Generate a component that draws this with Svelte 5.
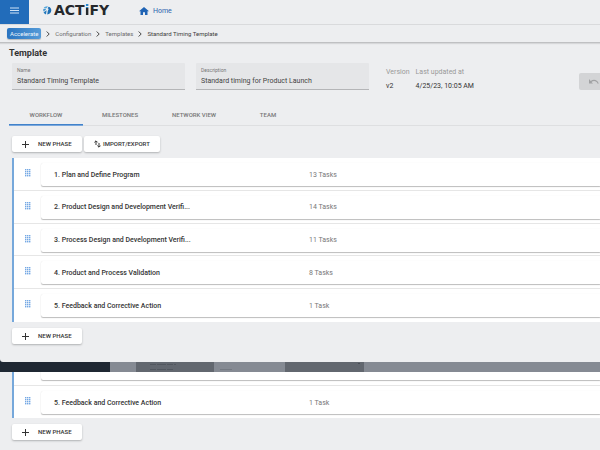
<script>
  const crumbs = ['Configuration', 'Templates', 'Standard Timing Template'];
  const tabs = ['WORKFLOW', 'MILESTONES', 'NETWORK VIEW', 'TEAM'];
  const phases = [
    { name: '1. Plan and Define Program', tasks: '13 Tasks' },
    { name: '2. Product Design and Development Verifi...', tasks: '14 Tasks' },
    { name: '3. Process Design and Development Verifi...', tasks: '11 Tasks' },
    { name: '4. Product and Process Validation', tasks: '8 Tasks' },
    { name: '5. Feedback and Corrective Action', tasks: '1 Task' }
  ];
  const dots = [0, 1, 2, 3].flatMap((r) => [0, 1, 2].map((c) => [c * 2, r * 2]));
  let active = $state('WORKFLOW');
</script>

{#snippet newPhase()}
  <button class="btn new" type="button">
    <svg width="7" height="7" viewBox="0 0 7 7" aria-hidden="true"><path d="M3.5 0v7M0 3.5h7" stroke="#333" stroke-width="1" /></svg>
    NEW PHASE
  </button>
{/snippet}

{#snippet phaseRow(phase)}
  <li>
    <svg class="grip" width="6" height="8" viewBox="0 0 6 8" aria-hidden="true">
      {#each dots as [x, y]}
        <rect {x} {y} width="1.400" height="1.400" fill="#74a8e4" />
      {/each}
    </svg>
    <div class="card">
      <span class="name">{phase.name}</span>
      <span class="tasks">{phase.tasks}</span>
    </div>
  </li>
{/snippet}

<div class="page">
  <section class="window">
    <header>
      <button class="menu" type="button" aria-label="Menu">
        <svg width="9" height="7" viewBox="0 0 9 7"><path d="M0 1h9M0 3.5h9M0 6h9" stroke="#cfe2f6" stroke-width="1" /></svg>
      </button>
      <div class="logo">
        <svg width="9" height="9" viewBox="0 0 9 9" aria-hidden="true">
          <path d="M.6 2.2C1.5.8 3.2.1 4.8.4L3.5 2.2Z" fill="#55a7dc" />
          <path d="M.3 3.1 3 2.8 2.6 4.1.3 5.4Z" fill="#3f93d0" />
          <path d="M.6 6.2 3.6 4.2 3 8.4C1.8 8 .9 7.2.6 6.2Z" fill="#2379bd" />
          <path d="M4.6 2.2 5.7.7C7.4 1.3 8.4 2.8 8.3 4.6 8.2 6.7 6.5 8.3 4.2 8.5L4.8 5 5.7 3.1Z" fill="#1c6eb4" />
        </svg>
        <span>ACT<b>i</b>FY</span>
      </div>
      <a class="home" href="#home">
        <svg width="10" height="8" viewBox="0 0 10 8" aria-hidden="true"><path d="M4 8V5.2h2V8h2.500V4.200H10L5 0 0 4.200h1.500V8Z" fill="#1f63b4" /></svg>
        Home
      </a>
    </header>

    <nav class="crumbs" aria-label="Breadcrumb">
      <a class="chip" href="#accelerate">Accelerate</a>
      {#each crumbs as crumb}
        <svg width="4" height="6" viewBox="0 0 4 6" aria-hidden="true"><path d="M.7.5 3.2 3 .7 5.500" fill="none" stroke="#444" stroke-width="1" /></svg>
        <a href="#crumb">{crumb}</a>
      {/each}
    </nav>

    <h1>Template</h1>

    <div class="details">
      <div class="field">
        <label for="name">Name</label>
        <input id="name" value="Standard Timing Template" />
      </div>
      <div class="field">
        <label for="description">Description</label>
        <input id="description" value="Standard timing for Product Launch" />
      </div>
      <dl>
        <div><dt>Version</dt><dd>v2</dd></div>
        <div><dt>Last updated at</dt><dd>4/25/23, 10:05 AM</dd></div>
      </dl>
      <button class="undo" type="button" aria-label="Undo" disabled>
        <svg width="10" height="5" viewBox="0 0 10 5"><path d="M0 0v4.500h4L2.500 3C4.800 1.200 7.600 2 8.700 4.700L9.700 4.400C8.400.7 4.700-.4 1.700 2Z" fill="#a0a1a3" /></svg>
      </button>
    </div>

    <div class="tabs" role="tablist">
      {#each tabs as tab}
        <button type="button" role="tab" aria-selected={active === tab} class:active={active === tab} onclick={() => (active = tab)}>{tab}</button>
      {/each}
    </div>

    <div class="actions">
      {@render newPhase()}
      <button class="btn transfer" type="button">
        <svg width="7" height="8" viewBox="0 0 7 8" aria-hidden="true"><path d="M2 5V1M.4 2.400 2 .8l1.600 1.600M5 3v4M3.400 5.600 5 7.200l1.600-1.600" fill="none" stroke="#333" stroke-width="1" /></svg>
        IMPORT/EXPORT
      </button>
    </div>

    <ul class="phases">
      {#each phases as phase}
        {@render phaseRow(phase)}
      {/each}
    </ul>
    <div class="foot">{@render newPhase()}</div>
  </section>

  <div class="strip">
    <svg width="490" height="10" viewBox="0 0 490 10" aria-hidden="true">
      <rect x="26" width="78" height="10" fill="#62676f" />
      <rect x="175" width="79" height="10" fill="#62676f" />
      <path d="M40 2.500h26M40 7.500h24" stroke="#52575f" stroke-dasharray="6 1 9 1" />
      <path d="M110 7.500h12" stroke="#747982" />
      <path d="M248 1.500h2" stroke="#494e56" />
    </svg>
  </div>

  <section class="below">
    <ul class="phases rest">
      <li class="tail" aria-hidden="true"><div class="card"></div></li>
      {@render phaseRow(phases[4])}
    </ul>
    <div class="foot">{@render newPhase()}</div>
  </section>
</div>

<style>
  :global(body) {
    margin: 0;
    background: #edeef0;
  }
  .page {
    display: flex;
    flex-direction: column;
    min-height: 100vh;
    overflow: hidden;
    font: 7px/10px Roboto, sans-serif;
    color: #333;
    background: #1f2833;
  }
  button,
  input {
    font: inherit;
    color: inherit;
    border: 0;
    margin: 0;
    padding: 0;
    background: none;
  }
  a {
    color: inherit;
    text-decoration: none;
  }
  svg {
    display: block;
    flex: none;
  }
  .window {
    padding-bottom: 8px;
    border-radius: 0 0 0 3px;
    background: #edeef0;
  }
  header {
    display: flex;
    height: 24px;
    border-bottom: 1px solid #d9dadc;
  }
  .menu {
    display: grid;
    place-items: center;
    width: 29px;
    padding-bottom: 3px;
    background: #226cba;
  }
  .logo {
    display: flex;
    align-items: center;
    gap: 2px;
    height: 20px;
    width: 83px;
    padding-left: 14px;
    font: 700 14px/20px "DejaVu Sans", sans-serif;
    color: #25282c;
  }
  .logo b {
    background: linear-gradient(#2b87cc 6px, #25282c 6px);
    background-clip: text;
    color: transparent;
  }
  .home {
    display: flex;
    align-items: center;
    gap: 4px;
    height: 22px;
    margin-left: 13px;
    color: #2a64ae;
  }
  .crumbs {
    display: flex;
    align-items: center;
    gap: 5px;
    height: 17px;
    padding-left: 7px;
    border-bottom: 1px solid #bfc0c2;
    box-shadow: 0 1px 1px #d6d7d9;
    font-size: 6px;
    color: #6c6c6c;
  }
  .crumbs a:last-child {
    color: #3d3d3d;
  }
  .crumbs .chip {
    padding: 0 3px;
    line-height: 11px;
    border-radius: 2px;
    background: linear-gradient(90deg, #2a74c0, #559bd8);
    box-shadow: 0 1px 1px #bbb;
    color: #f0f6fc;
  }
  h1 {
    margin: 5px 0 4px 9px;
    font-size: 9px;
    line-height: 11px;
    font-weight: 700;
  }
  .details {
    display: flex;
    align-items: flex-start;
    gap: 11px;
    padding-left: 12px;
  }
  .field {
    display: flex;
    flex-direction: column;
    width: 173px;
    height: 27px;
    box-sizing: border-box;
    padding: 4px 5px 0;
    border-bottom: 1px solid #b4b5b7;
    border-radius: 1px 1px 0 0;
    background: #e5e6e8;
  }
  .field label {
    font-size: 5px;
    line-height: 7px;
    color: #777;
  }
  .field input {
    height: 13px;
    color: #444;
  }
  dl {
    display: flex;
    gap: 6px;
    margin: 4px 0 0 6px;
    line-height: 10px;
  }
  dt {
    color: #999;
    margin-bottom: 4px;
  }
  dd {
    margin: 0;
  }
  .undo {
    display: grid;
    place-items: center;
    width: 30px;
    height: 17px;
    margin: 10px -9px 0 auto;
    border-radius: 2px;
    background: #d3d4d6;
  }
  .tabs {
    display: flex;
    margin: 14px 0 0 9px;
    border-bottom: 1px solid #dedfe1;
  }
  .tabs button {
    width: 74px;
    height: 20px;
    font-size: 6px;
    font-weight: 500;
    color: #777;
    border-bottom: 1px solid transparent;
  }
  .tabs .active {
    border-color: #4182ca;
    box-shadow: 0 1px #7ba8dc;
  }
  .actions {
    display: flex;
    gap: 2px;
    padding: 10px 0 6px 12px;
  }
  .btn {
    display: flex;
    align-items: center;
    gap: 2px;
    width: 70px;
    height: 16px;
    padding-left: 10px;
    border-radius: 2px;
    background: #fff;
    box-shadow: 0 1px 2px #b0b1b3;
    font-size: 6px;
    font-weight: 500;
    color: #333;
  }
  .new {
    gap: 9px;
  }
  .transfer {
    width: 76px;
  }
  .phases {
    display: grid;
    grid-auto-rows: 1fr;
    height: 164px;
    margin: 0 0 0 12px;
    padding: 0;
    list-style: none;
    background: #fff;
    border-left: 2px solid #76a8db;
  }
  .rest {
    grid-template-rows: 14px 32px;
    height: 46px;
  }
  li {
    display: flex;
    align-items: flex-start;
    gap: 10px;
    min-height: 0;
    padding: 5px 0 0 11px;
    border-bottom: 1px solid #e6e6e6;
  }
  li:last-child {
    border-color: transparent;
  }
  .tail {
    align-items: flex-end;
    overflow: hidden;
    padding: 0 0 5px 27px;
  }
  .grip {
    margin-top: 6px;
  }
  .card {
    display: flex;
    flex: 1;
    align-items: center;
    height: 23px;
    padding-left: 13px;
    border-radius: 2px 0 0 2px;
    box-shadow: 0 1px 1px #bcbcbc, 0 0 1px #e4e4e4;
  }
  .name {
    width: 255px;
    white-space: nowrap;
    font-weight: 500;
  }
  .tasks {
    color: #777;
  }
  .foot {
    display: flex;
    padding: 6px 0 10px 12px;
  }
  .strip {
    display: flex;
    height: 10px;
    overflow: hidden;
    padding-left: 110px;
    background: linear-gradient(90deg, #1f2833 110px, #858a93 110px);
  }
  .below {
    flex: 1;
    background: #edeef0;
  }
</style>
